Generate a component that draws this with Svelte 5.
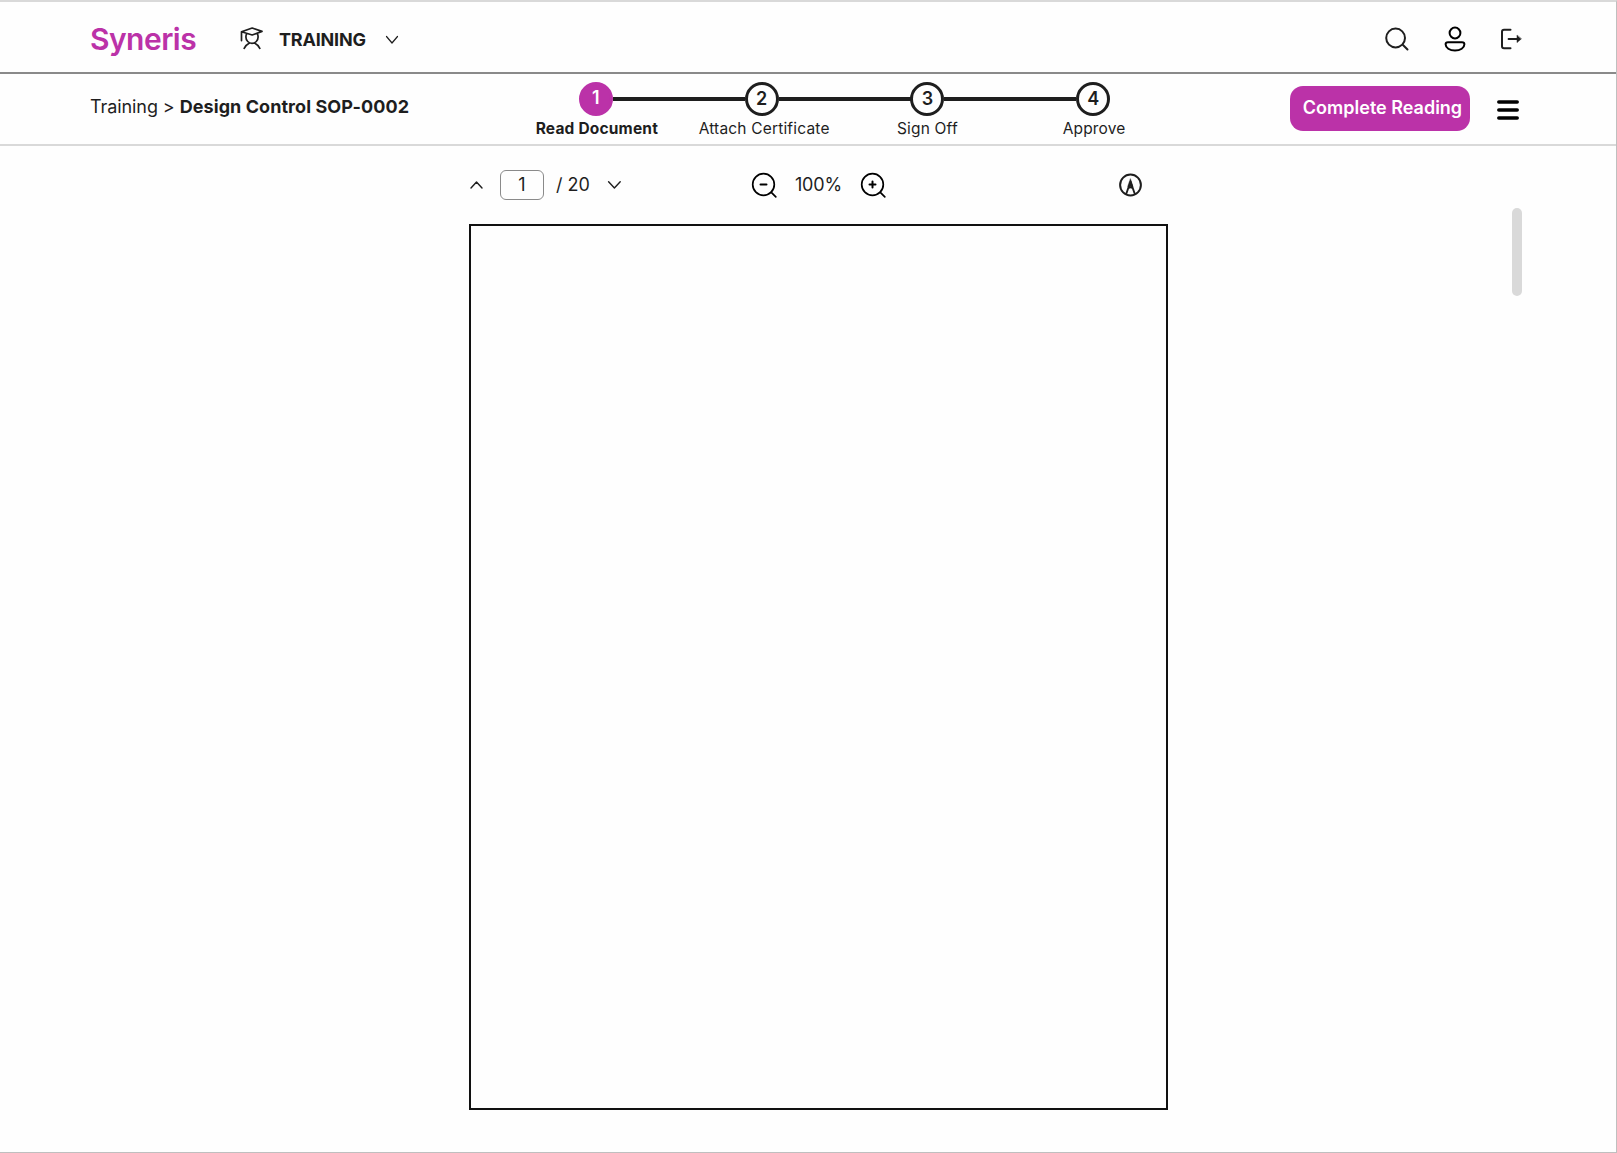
<script>
  const steps = [
    { n: 1, label: 'Read Document', active: true },
    { n: 2, label: 'Attach Certificate' },
    { n: 3, label: 'Sign Off' },
    { n: 4, label: 'Approve' }
  ];
</script>

<div class="app">
  <header class="topbar">
    <span class="brand">Syneris</span>
    <svg class="cap" width="24" height="24" viewBox="0 0 24 24">
      <path d="M1.500 14.600V5.800L12.200 2 22 5.400 12.200 9 6.500 7.300 1.500 5.800M6.700 7.600c-.6 1-.8 2-.8 3.400 0 3.600 2.800 6.300 6.100 6.300s6.100-2.700 6.100-6.300c0-1.400-.2-2.400-.8-3.400M4.200 22.300c1.300-2.600 2.900-4 4.900-5M19.800 22.300c-1.300-2.600-2.900-4-4.900-5" />
    </svg>
    <span class="module">TRAINING</span>
    <svg class="chev" width="14" height="10" viewBox="0 0 14 10"><path d="M1.500 1.500 7 8l5.500-6.500" /></svg>
    <nav class="actions">
      <svg width="26" height="26" viewBox="0 0 26 26"><path class="w2" d="M21 12a9.400 9.400 0 1 1-18.800 0 9.400 9.400 0 0 1 18.800 0ZM18.500 18.500l5 5" /></svg>
      <svg class="black" width="24" height="26" viewBox="0 0 24 26"><circle class="w2" cx="12" cy="7" r="5.400" /><path class="w2" d="M5 16.200h14c1.500 0 2.400.9 2.400 2.100 0 3.500-4 6.200-9.400 6.200s-9.400-2.700-9.400-6.200c0-1.200.9-2.100 2.400-2.100Z" /></svg>
      <svg width="24" height="24" viewBox="0 0 24 24"><path class="w2" d="M11.500 2.800H5Q3 2.800 3 4.800v14.400Q3 21.200 5 21.200h6.500M9.600 12H19" /><path class="fill" d="M18 8.400v7.200l4.200-3.600Z" /></svg>
    </nav>
  </header>

  <section class="subbar">
    <div class="crumbs">Training &gt; <b>Design Control SOP-0002</b></div>
    <ol class="steps">
      {#each steps as s}
        <li class:active={s.active}>
          <span class="dot">{s.n}</span>
          <span class="label">{s.label}</span>
        </li>
      {/each}
    </ol>
    <button class="complete">Complete Reading</button>
    <svg class="menu" width="22" height="20" viewBox="0 0 22 20"><path d="M1.800 2h18.400M1.800 10h18.400M1.800 18h18.400" /></svg>
  </section>

  <main>
    <div class="viewer">
      <div class="tools">
        <svg class="up" width="14" height="10" viewBox="0 0 14 10"><path d="M2 8 7.500 2l5.500 6" /></svg>
        <span class="page">1</span>
        <span class="total">/ 20</span>
        <svg class="down" width="14" height="10" viewBox="0 0 14 10"><path d="M1.600 1.800 7.400 8l5.800-6.200" /></svg>
        <svg class="zoom out" width="26" height="26" viewBox="0 0 26 26"><circle cx="12.500" cy="12.500" r="10.800" /><path d="M20.300 20.300l4.500 4.500" /><path class="w2" d="M9.500 12.500h6" /></svg>
        <span class="pct">100%</span>
        <svg class="zoom in" width="26" height="26" viewBox="0 0 26 26"><circle cx="12.500" cy="12.500" r="10.800" /><path d="M20.300 20.300l4.500 4.500" /><path class="w2" d="M9.500 12.500h6M12.500 9.500v6" /></svg>
        <svg class="pen" width="24" height="24" viewBox="0 0 24 24"><circle cx="11.500" cy="12" r="10.400" /><path class="blade" d="M7.300 20.800 11.500 8.500l4.200 12.300M9.500 15q2-1.600 4 0" /><path class="fill" d="M11.500 6 13.900 13.500H9.100Z" /></svg>
      </div>
      <div class="sheet"></div>
    </div>
    <div class="thumb"></div>
  </main>
</div>

<style>
  :global(body) { margin: 0; background: #fff; }
  .app {
    box-sizing: border-box; width: 1617px; height: 1153px; overflow: hidden;
    display: flex; flex-direction: column; background: #fefefe; color: #1e1e1e;
    border-top: 2px solid #d9d9d9; border-right: 1px solid #bfbfbf; border-bottom: 1px solid #bfbfbf;
    font-family: Inter, sans-serif; font-size: 18px;
  }
  svg { flex: none; fill: none; stroke: #1e1e1e; stroke-width: 1.700; stroke-linecap: round; stroke-linejoin: round; }
  svg .w2 { stroke-width: 2; }
  svg .fill { fill: #1e1e1e; stroke-width: .5; }
  .black { stroke: #000; }
  .topbar {
    box-sizing: border-box; height: 72px; flex: none; display: flex; align-items: center;
    padding: 0 93px 0 90px; border-bottom: 2px solid #8a8a8a; white-space: nowrap;
  }
  .brand { width: 150px; font-size: 30px; font-weight: 600; line-height: 36px; letter-spacing: -.52px; color: #bb32a8; padding-top: 3px; }
  .cap { margin-top: 2px; }
  .module { width: 106px; margin-left: 15px; font-weight: 700; letter-spacing: -.2px; padding-top: 5px; }
  .chev { margin-top: 5px; stroke-width: 1.200; }
  .actions { display: flex; align-items: center; gap: 33px; margin-left: auto; padding-top: 3px; }
  .actions svg:nth-child(-n + 2) { position: relative; left: 1px; }
  .subbar {
    box-sizing: border-box; height: 72px; flex: none; display: flex;
    padding: 0 97px 0 90px; border-bottom: 2px solid #d9d9d9; white-space: nowrap;
  }
  .crumbs { width: 423px; padding-top: 22px; line-height: 22px; letter-spacing: -.08px; }
  .crumbs b { letter-spacing: .07px; }
  .steps { display: flex; list-style: none; margin: 0; padding: 7.500px 0 0; width: 663px; }
  li { width: 165.750px; display: flex; flex-direction: column; align-items: center; position: relative; }
  li + li::before { content: ''; position: absolute; top: 15.500px; left: -66px; width: 132px; height: 4px; background: #1e1e1e; }
  .dot {
    box-sizing: border-box; width: 34px; height: 34px; border: 3px solid #1e1e1e; border-radius: 50%;
    line-height: 27px; text-align: center; font-weight: 600; z-index: 1;
  }
  .active .dot { background: #bb32a8; border-color: #bb32a8; color: #fff; line-height: 26px; }
  .label { font-size: 15.500px; line-height: 20px; margin: 3px 0 0; letter-spacing: .18px; }
  li:nth-child(2) .label { margin-left: 5px; }
  li:nth-child(4) .label { margin-left: 2px; }
  .active .label { font-weight: 700; margin-left: 2px; }
  .complete {
    box-sizing: border-box; width: 180px; height: 45px; margin: 12px 0 0 114px; padding: 0 0 2px 5px; border: 0;
    border-radius: 13px; background: #bb32a8; color: #fff; font: 600 18px Inter, sans-serif; white-space: nowrap;
  }
  .menu { margin: 26px 0 0 27px; stroke: #000; stroke-width: 3.500; }
  main { flex: 1; display: flex; justify-content: space-between; padding: 0 94px 0 469px; }
  .viewer { width: 699px; }
  .tools { display: flex; align-items: center; height: 78px; }
  .page {
    box-sizing: border-box; width: 44px; height: 30px; border: 1px solid #8a8a8a; border-radius: 6px;
    margin-left: 17px; line-height: 27px; text-align: center;
  }
  .total { width: 51px; margin-left: 12px; padding-bottom: 2px; }
  .up, .down { stroke-width: 1.400; }
  .zoom { stroke: #000; margin-bottom: 1px; }
  .out { margin-left: 130px; }
  .pct { width: 65px; margin-left: 18px; padding-bottom: 2px; letter-spacing: -.2px; }
  .pen { margin-left: 233px; stroke-width: 2; }
  .pen .blade { stroke-width: 1.900; }
  .sheet { box-sizing: border-box; height: 886px; border: 2px solid #111; }
  .thumb { width: 10px; height: 88px; margin-top: 62px; border-radius: 5px; background: #d9d9d9; }
</style>
